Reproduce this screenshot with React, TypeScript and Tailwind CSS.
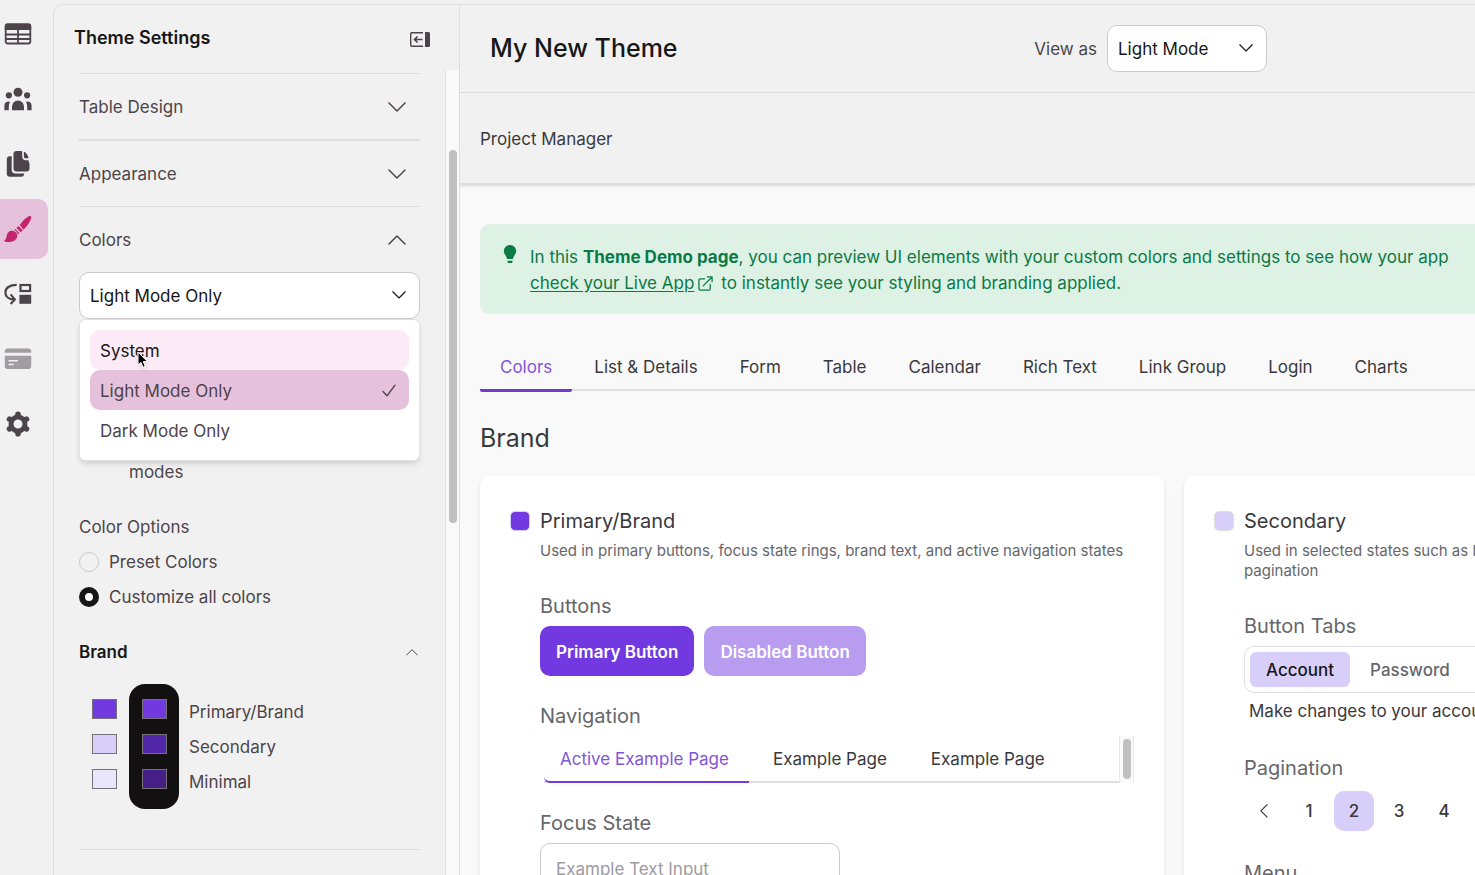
import { useState } from 'react'

const accordionRows = ['Table Design', 'Appearance']

const modes = ['System', 'Light Mode Only', 'Dark Mode Only']

const brandColors = [
  { id: 'primary', label: 'Primary/Brand', light: 'bg-[#7239e0]', dark: 'bg-[#7239e0]' },
  { id: 'secondary', label: 'Secondary', light: 'bg-[#d7cff9]', dark: 'bg-[#5226a8]' },
  { id: 'minimal', label: 'Minimal', light: 'bg-[#e9e5fc]', dark: 'bg-[#451f85]' },
]

const demoTabs = [
  'Colors',
  'List & Details',
  'Form',
  'Table',
  'Calendar',
  'Rich Text',
  'Link Group',
  'Login',
  'Charts',
]

const navPages = ['Active Example Page', 'Example Page', 'Example Page']

function Chevron({ className = '' }: { className?: string }) {
  return (
    <svg viewBox="0 0 18 10" fill="none" stroke="currentColor" strokeWidth="1.5" strokeLinecap="round" strokeLinejoin="round" className={className}>
      <path d="M1 1 9 9 17 1" />
    </svg>
  )
}

function TableIcon() {
  return (
    <svg viewBox="0 0 28 28" className="size-7" fill="none">
      <rect x="1.7" y="4.5" width="24.6" height="19" rx="2" stroke="currentColor" strokeWidth="1.8" />
      <path d="M.8 5.7a2.2 2.2 0 0 1 2.2-2.2h22a2.2 2.2 0 0 1 2.2 2.200v4.200H.8z" fill="currentColor" />
      <path d="M1.5 14.5h25M1.5 19h25M14 9v14.5" stroke="currentColor" strokeWidth="1.8" />
    </svg>
  )
}

function PeopleIcon() {
  return (
    <svg viewBox="0 0 28 28" className="size-7" fill="currentColor">
      <circle cx="14" cy="7.2" r="4.500" />
      <circle cx="4.900" cy="10.300" r="3.100" />
      <circle cx="23.100" cy="10.300" r="3.100" />
      <path d="M8 25.200v-3.500a6 6.300 0 0 1 12 0v3.500zM.4 25.200V20.500a4.100 4.100 0 0 1 5.600-3.800C5.200 18.300 4.800 20.100 4.800 22.200v3zM27.600 25.200V20.500A4.100 4.100 0 0 0 22 16.700c.8 1.600 1.200 3.400 1.200 5.500v3z" />
    </svg>
  )
}

function PagesIcon() {
  return (
    <svg viewBox="0 0 28 28" className="size-7" fill="currentColor">
      <path d="M12.300 1h4.700c.7 0 1.200.5 1.200 1.200v4.600c0 2 1.500 3.500 3.500 3.500H24.300c.7 2 1.200 2.800 1.200 4v4.500c0 1.600-1.200 2.800-2.800 2.800H12.300c-1.600 0-2.800-1.200-2.800-2.800v-15C9.500 2.200 10.700 1 12.300 1z" />
      <path d="M19.900 1.600c2 .7 4.100 3.400 4.600 6.700h-3.100c-.9 0-1.500-.6-1.500-1.500z" />
      <path d="M2.800 9.200c0-1.700 1.300-3 3-3h1.900V19.900c0 2 1.500 3.500 3.500 3.500h8.900v.6c0 1.500-1.200 2.700-2.700 2.700H5.800c-1.700 0-3-1.300-3-3z" />
    </svg>
  )
}

function BrushIcon() {
  return (
    <svg viewBox="0 0 28 28" className="size-7" fill="currentColor">
      <path d="M15.800 10C18.600 6 22.600 2.200 25.600 1.100c1.100-.3 1.900.5 1.600 1.600-.9 3.800-3.700 8.300-7.700 12z" />
      <path d="m14.700 11.100 4 4.300-2.100 1.900-4.100-4.200zM11.300 13.900l4.100 4.300-1.300 1.300-2.200-3.400-1.800-1.200z" />
      <path d="M7.700 15.800c3.200 0 5.600 2.200 5.600 5 0 3.600-3.400 6.300-8.900 6.300-1.800 0-3-.2-3.600-.6-.6-.4-.5-1.100 0-1.400 1.200-.6 1.300-1.800 1.800-3.900.7-3.400 2.400-5.400 5.100-5.400z" />
    </svg>
  )
}

function FlowIcon() {
  return (
    <svg viewBox="0 0 28 28" className="size-7" fill="none" stroke="currentColor">
      <path d="M12.7 4.800C5.500 4.800 1.400 8.200 1.400 12.200c0 4.400 3.400 7.200 8.400 7.200M6.600 14.400l4.200 5-4.200 4.600" strokeWidth="2.200" />
      <rect x="16.500" y="5" width="9.600" height="6" strokeWidth="2.200" />
      <rect x="15.400" y="14.800" width="11.800" height="9" fill="currentColor" stroke="none" />
    </svg>
  )
}

function CardIcon() {
  return (
    <svg viewBox="0 0 28 28" className="size-7 text-[#a19ca0]" fill="currentColor">
      <path d="M3.700 3.500h20.600c1.600 0 2.900 1.300 2.900 2.900v1.300H.8V6.400c0-1.600 1.300-2.900 2.900-2.900z" />
      <path fillRule="evenodd" d="M.8 10.800h26.400v10.400c0 1.600-1.300 2.900-2.900 2.900H3.700c-1.600 0-2.900-1.300-2.900-2.900zM4.500 15v1.500H14V15zm0 3.700v1.500h5.200v-1.500z" />
    </svg>
  )
}

function GearIcon() {
  return (
    <svg viewBox="0 0 28 28" className="size-7" fill="none" stroke="currentColor">
      <circle cx="14" cy="14" r="7" strokeWidth="5" />
      <path
        d="M14 5.600V4.200M14 23.800V22.400M6.700 9.800 5.500 9.100M22.500 18.900l-1.200-.7M6.700 18.200l-1.200.7M22.500 9.100l-1.200.7"
        strokeWidth="5.600"
        strokeLinecap="round"
      />
    </svg>
  )
}

function CollapseIcon() {
  return (
    <svg viewBox="0 0 20 20" className="size-5" fill="none" stroke="currentColor">
      <path d="M13 4.700H1.700a1 1 0 0 0-1 1v11.600a1 1 0 0 0 1 1H13" strokeWidth="1.400" />
      <path d="M12.500 11.500H4.500M7.500 8.500l-3 3 3 3" strokeWidth="1.700" />
      <path d="M15 4h3.500A1.500 1.500 0 0 1 20 5.500v12a1.500 1.500 0 0 1-1.500 1.500H15z" fill="currentColor" stroke="none" />
    </svg>
  )
}

function BulbIcon() {
  return (
    <svg viewBox="0 0 14 20" className="h-5 w-[14px]" fill="currentColor">
      <path d="M7 1a6 6 0 0 1 6.200 6c0 3-2.600 4.600-3.300 8H4.100C3.400 11.600.8 10 .8 7A6 6 0 0 1 7 1zM4.500 16.800h5v.6c0 1-.8 1.600-1.700 1.600H6.200c-.9 0-1.700-.6-1.700-1.600z" />
    </svg>
  )
}

function ExternalIcon() {
  return (
    <svg viewBox="0 0 16 16" className="mr-2 ml-1 inline size-[15px] align-[-2px]" fill="none" stroke="currentColor" strokeWidth="1.4" strokeLinecap="round" strokeLinejoin="round">
      <path d="M7 3H2.500A1.500 1.500 0 0 0 1 4.500v9A1.500 1.500 0 0 0 2.500 15h9a1.500 1.500 0 0 0 1.500-1.500V9M10 1h5v5M15 1 5.500 10.500" />
    </svg>
  )
}

const railItems = [
  { label: 'Tables', icon: TableIcon },
  { label: 'Users', icon: PeopleIcon },
  { label: 'Pages', icon: PagesIcon },
  { label: 'Themes', icon: BrushIcon },
  { label: 'Flows', icon: FlowIcon },
  { label: 'Payments', icon: CardIcon },
  { label: 'Settings', icon: GearIcon },
]

function Rail() {
  return (
    <nav className="flex w-[53px] shrink-0 flex-col gap-[5px]">
      {railItems.map(({ label, icon: ItemIcon }) => (
        <button
          key={label}
          aria-label={label}
          className={`flex h-[60px] w-12 items-center justify-center rounded-r-[10px] pr-3 ${
            label === 'Themes' ? 'bg-[#e6c1dc] text-[#c4246c]' : 'text-[#4d444a]'
          }`}
        >
          <ItemIcon />
        </button>
      ))}
    </nav>
  )
}

function ModeSelect() {
  const [mode, setMode] = useState('Light Mode Only')

  return (
    <div className="relative">
      <select
        aria-label="Color mode"
        value={mode}
        onChange={(e) => setMode(e.target.value)}
        className="block h-[47px] w-full appearance-none rounded-[10px] border border-[#cbc9ca] bg-white px-[10px] pt-px text-[#171717]"
      >
        {modes.map((m) => (
          <option key={m}>{m}</option>
        ))}
      </select>
      <Chevron className="pointer-events-none absolute top-[19px] right-[14px] w-[14px] text-[#171717]" />

      {/* Open menu */}
      <div role="listbox" className="absolute inset-x-0 top-full z-10 rounded-md border border-[#e3e1e2] bg-white p-[10px] shadow-md">
        {modes.map((m) => (
          <button
            key={m}
            role="option"
            aria-selected={m === mode}
            onClick={() => setMode(m)}
            className={`flex h-10 w-full items-center justify-between rounded-[10px] px-[10px] pt-px ${
              m === mode ? 'bg-[#e6c1dc]' : m === 'System' ? 'bg-[#fcebf6] text-[#171717]' : ''
            }`}
          >
            {m}
            {m === mode && (
              <svg viewBox="0 0 16 14" className="mr-[2px] w-4" fill="none" stroke="currentColor" strokeWidth="1.4" strokeLinecap="round" strokeLinejoin="round">
                <path d="M2 7.500 6 11.800 14 1.200" />
              </svg>
            )}
          </button>
        ))}
        <svg viewBox="0 0 12 18" className="absolute top-[31px] left-[57px] w-3 drop-shadow">
          <path d="M1 1v13l3-2.600 2 4.900 2.300-1-2-4.700h4.200z" fill="#000" stroke="#fff" strokeWidth="1" />
        </svg>
      </div>
    </div>
  )
}

function SettingsPanel() {
  const [scheme, setScheme] = useState('custom')

  return (
    <aside className="flex w-[406px] shrink-0 flex-col rounded-tl-[10px] border-t border-l border-[#dfdddf]">
      <div className="flex h-[65px] shrink-0 items-center justify-between pr-[29px] pl-5">
        <h2 className="text-[18px] font-semibold text-[#171717]">Theme Settings</h2>
        <button aria-label="Collapse panel">
          <CollapseIcon />
        </button>
      </div>

      <div className="flex min-h-0 flex-1">
        <div className="flex-1 overflow-hidden px-[25px] pt-[3px]">
          {accordionRows.map((row) => (
            <button
              key={row}
              className="flex h-[66px] w-full items-center justify-between border-[#dfdddf] pr-[14px] first:border-t even:h-[67px] even:border-t-2"
            >
              {row}
              <Chevron className="w-[18px]" />
            </button>
          ))}
          <button className="flex h-[66px] w-full items-center justify-between border-t border-[#dfdddf] pr-[14px]">
            Colors
            <Chevron className="w-[18px] rotate-180" />
          </button>

          <ModeSelect />
          <p className="mt-[140px] ml-[50px]">modes</p>

          <fieldset className="mt-[29px]">
            <legend className="mb-[9px]">Color Options</legend>
            <div className="flex flex-col gap-[9px]">
              <label className="flex items-center gap-[10px]">
                <input
                  type="radio"
                  name="scheme"
                  checked={scheme === 'preset'}
                  onChange={() => setScheme('preset')}
                  className="size-5 appearance-none rounded-full border border-[#cbc9ca] checked:border-[6px] checked:border-[#171717] checked:bg-white"
                />
                Preset Colors
              </label>
              <label className="flex items-center gap-[10px]">
                <input
                  type="radio"
                  name="scheme"
                  checked={scheme === 'custom'}
                  onChange={() => setScheme('custom')}
                  className="size-5 appearance-none rounded-full border border-[#cbc9ca] checked:border-[6px] checked:border-[#171717] checked:bg-white"
                />
                Customize all colors
              </label>
            </div>
          </fieldset>

          <button className="mt-[29px] flex w-full items-center justify-between font-semibold text-[#171717]">
            Brand
            <Chevron className="mr-[2px] w-3 rotate-180 text-[#4d444a]" />
          </button>

          <div className="mt-[19px] flex">
            <div className="flex w-[50px] flex-col gap-[15px] pt-[15px] pb-5 pl-[13px]">
              {brandColors.map((c) => (
                <button key={c.id} aria-labelledby={c.id} className={`h-5 w-[25px] border border-[#767077] ${c.light}`} />
              ))}
            </div>
            <div className="flex w-[50px] flex-col gap-[15px] rounded-2xl bg-[#121011] pt-[15px] pb-5 pl-[13px]">
              {brandColors.map((c) => (
                <button key={c.id} aria-labelledby={c.id} className={`h-5 w-[25px] border border-[#767077] ${c.dark}`} />
              ))}
            </div>
            <div className="ml-[10px] pt-[11px]">
              {brandColors.map((c) => (
                <p key={c.id} id={c.id} className="leading-[35px]">
                  {c.label}
                </p>
              ))}
            </div>
          </div>
          <hr className="mt-10 border-[#dfdddf]" />
        </div>

        {/* Scrollbar */}
        <div className="w-[14px] border-l border-[#e3e3e3] bg-[#f9f9f9] pt-20 pl-[3px]">
          <div className="h-[373px] w-2 rounded-full bg-[#c0c0c0]" />
        </div>
      </div>
    </aside>
  )
}

function PrimaryCard() {
  return (
    <section className="rounded-[10px] bg-white p-[30px] shadow-md">
      <div className="flex gap-[10px]">
        <div className="mt-[5px] size-5 shrink-0 rounded-[5px] border border-[#d7cff9] bg-[#7239e0]" />
        <div className="min-w-0 flex-1">
          <h3 className="text-xl leading-[30px] text-[#39393d]">Primary/Brand</h3>
          <p className="mt-[5px] text-[15px] leading-5">
            Used in primary buttons, focus state rings, brand text, and active navigation states
          </p>

          <h4 className="mt-[30px] text-xl leading-[30px]">Buttons</h4>
          <div className="mt-[5px] flex gap-[10px] font-semibold text-white">
            <button className="h-[50px] rounded-[10px] bg-[#7239e0] px-4 pt-px">Primary Button</button>
            <button disabled className="h-[50px] rounded-[10px] bg-[#b89cef] px-4 pt-px">
              Disabled Button
            </button>
          </div>

          <h4 className="mt-[25px] text-xl leading-[30px]">Navigation</h4>
          <div className="mt-[5px] flex h-[47px]">
            <div className="ml-1 flex flex-1 gap-1 border-b-2 border-[#dfdfe1] text-[#39393d]">
              {navPages.map((page, i) => (
                <a
                  key={i}
                  href="#"
                  className="flex items-center px-5 pt-px first:-mb-[2px] first:rounded-bl-md first:border-b-2 first:border-[#7239e0] first:pl-4 first:text-[#7f56d9]"
                >
                  {page}
                </a>
              ))}
            </div>
            <div className="w-[15px] border-x border-[#e8e8e8] bg-[#fafafa] px-[3px] pt-[3px]">
              <div className="h-10 w-2 rounded-full bg-[#c0c0c0]" />
            </div>
          </div>

          <label htmlFor="focus-demo" className="mt-[25px] block text-xl leading-[30px]">
            Focus State
          </label>
          <input
            id="focus-demo"
            placeholder="Example Text Input"
            className="mt-[5px] block h-[50px] w-[300px] rounded-[10px] border border-[#cbcbcf] px-[15px] pt-px placeholder:text-[#9b9ba0]"
          />
        </div>
      </div>
    </section>
  )
}

function SecondaryCard() {
  return (
    <section className="rounded-[10px] bg-white p-[30px] shadow-md">
      <div className="flex gap-[10px]">
        <div className="mt-[5px] size-5 shrink-0 rounded-[5px] border border-[#dfdfe1] bg-[#d7cff9]" />
        <div className="min-w-0 flex-1">
          <h3 className="text-xl leading-[30px] text-[#39393d]">Secondary</h3>
          <p className="mt-[5px] text-[15px] leading-5">
            Used in selected states such as button tabs and
            <br />
            pagination
          </p>

          <h4 className="mt-[30px] text-xl leading-[30px]">Button Tabs</h4>
          <div className="mt-[5px] flex h-[47px] rounded-[10px] border border-[#dfdfe1] p-[5px] font-medium">
            <button className="rounded-md bg-[#d7cff9] px-4 text-[#171717]">Account</button>
            <button className="ml-1 px-4">Password</button>
          </div>
          <p className="mt-[5px] ml-[5px] text-[#39393d]">Make changes to your account here.</p>

          <h4 className="mt-[29px] text-xl leading-[30px]">Pagination</h4>
          <div className="mt-[8px] flex gap-[5px] font-medium text-[#39393d]">
            <button aria-label="Previous page" className="flex size-10 items-center justify-center">
              <Chevron className="w-[14px] rotate-90" />
            </button>
            {[1, 2, 3, 4].map((n) => (
              <button key={n} className={`size-10 rounded-[10px] ${n === 2 ? 'bg-[#d7cff9]' : ''}`}>
                {n}
              </button>
            ))}
          </div>

          <h4 className="mt-[27px] text-xl leading-[30px]">Menu</h4>
        </div>
      </div>
    </section>
  )
}

export default function App() {
  return (
    <div className="flex h-screen overflow-hidden bg-[#f1f1f1] pt-1 font-['Inter',sans-serif] text-[17px] leading-[26px] text-[#4d444a]">
      <Rail />
      <SettingsPanel />

      <main className="flex min-w-0 flex-1 flex-col overflow-hidden border-t border-l border-[#dfdddf] bg-[#f9f9f9]">
        {/* Header */}
        <header className="flex h-[88px] shrink-0 items-center justify-between border-b border-[#dfdddf] bg-[#f1f1f1] pr-[208px] pl-[30px]">
          <h1 className="text-[25px] leading-[35px] font-medium text-[#171717]">My New Theme</h1>
          <div className="flex items-center gap-[10px]">
            <label htmlFor="view-as">View as</label>
            <div className="relative">
              <select
                id="view-as"
                className="block h-[47px] w-40 appearance-none rounded-[10px] border border-[#cbc9ca] bg-white px-[10px] pt-px text-[#171717]"
              >
                <option>Light Mode</option>
              </select>
              <Chevron className="pointer-events-none absolute top-[19px] right-[14px] w-[14px] text-[#171717]" />
            </div>
          </div>
        </header>

        <div className="flex h-[92px] shrink-0 items-center border-b-2 border-[#dfdfdf] bg-[#f1f1f1] px-5 pt-[2px] text-[#39393d] shadow-sm">
          Project Manager
        </div>

        {/* Demo page */}
        <div className="min-w-[1428px] px-5 pt-[39px] text-[#66666b]">
          <div className="flex h-[90px] rounded-[10px] bg-[#ddf1e5] pt-5 pl-[23px] text-[#0b7a45]">
            <BulbIcon />
            <p className="ml-[13px] whitespace-nowrap">
              In this <b className="font-bold">Theme Demo page</b>, you can preview UI elements with your custom colors and
              settings to see how your app
              <br />
              <a href="#" className="underline underline-offset-2">
                check your Live App
              </a>
              <ExternalIcon />
              to instantly see your styling and branding applied.
            </p>
          </div>

          <div role="tablist" className="mt-[30px] flex h-[47px] gap-[2px] border-b-2 border-[#dfdfe1] text-[#39393d]">
            {demoTabs.map((tab) => (
              <button
                key={tab}
                role="tab"
                className="flex h-12 items-center border-b-3 border-transparent px-5 pt-px first:rounded-b-xs first:border-[#7239d0] first:text-[#7f56d9]"
              >
                {tab}
              </button>
            ))}
          </div>

          <h2 className="mt-[30px] text-[25px] leading-[35px] text-[#39393d]">Brand</h2>
          <div className="mt-5 grid grid-cols-2 gap-5">
            <PrimaryCard />
            <SecondaryCard />
          </div>
        </div>
      </main>
    </div>
  )
}
